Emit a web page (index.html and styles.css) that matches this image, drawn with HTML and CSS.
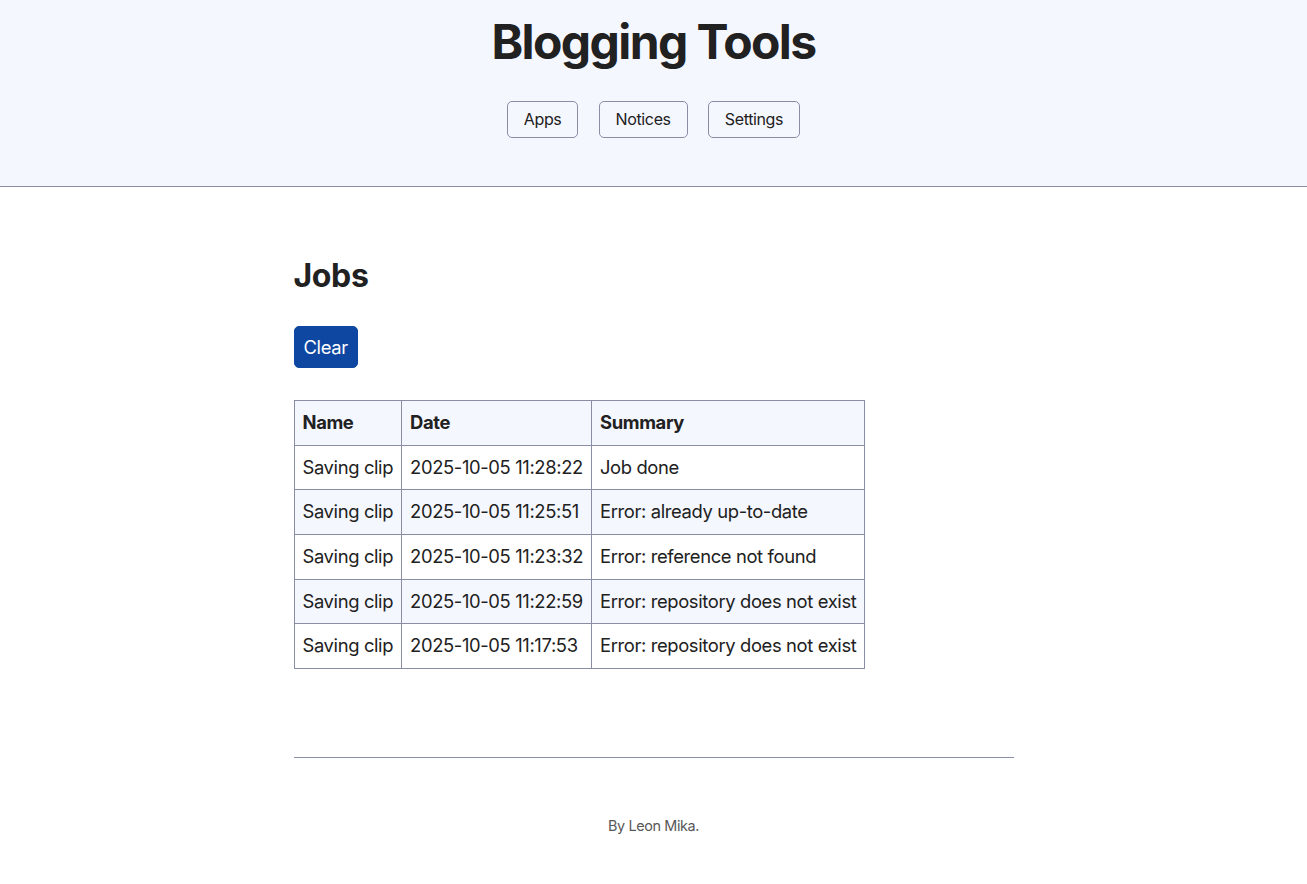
FILE: index.html
```html
<!DOCTYPE html>
<html lang="en">
<head>
<meta charset="utf-8">
<title>Blogging Tools</title>
<link rel="stylesheet" href="styles.css">
</head>
<body>
<header class="site-header">
  <h1 class="site-title">Blogging Tools</h1>
  <nav class="site-nav">
    <a href="#">Apps</a>
    <a href="#">Notices</a>
    <a href="#">Settings</a>
  </nav>
</header>
<main class="content">
  <h2 class="page-title">Jobs</h2>
  <form class="actions">
    <button type="button" class="btn">Clear</button>
  </form>
  <table class="jobs">
    <thead>
      <tr><th>Name</th><th>Date</th><th>Summary</th></tr>
    </thead>
    <tbody>
      <tr><td>Saving clip</td><td>2025-10-05 11:28:22</td><td>Job done</td></tr>
      <tr><td>Saving clip</td><td>2025-10-05 11:25:51</td><td>Error: already up-to-date</td></tr>
      <tr><td>Saving clip</td><td>2025-10-05 11:23:32</td><td>Error: reference not found</td></tr>
      <tr><td>Saving clip</td><td>2025-10-05 11:22:59</td><td>Error: repository does not exist</td></tr>
      <tr><td>Saving clip</td><td>2025-10-05 11:17:53</td><td>Error: repository does not exist</td></tr>
    </tbody>
  </table>
</main>
<footer class="site-footer">
  <p>By Leon Mika.</p>
</footer>
</body>
</html>
```

FILE: styles.css
```css
* { box-sizing: border-box; }

html { font-size: 16px; }

body {
  margin: 0;
  font-family: Inter, "Noto Sans", sans-serif;
  font-size: 18.4px;
  line-height: 1.5;
  letter-spacing: -0.02em;
  color: #212121;
  background: #fff;
  display: grid;
  grid-template-columns: 1fr min(720px, 90%) 1fr;
}

body > * { grid-column: 2; }

.site-header {
  grid-column: 1 / -1;
  background: #f5f7ff;
  border-bottom: 1px solid #898ea4;
  text-align: center;
  padding: 0 8px 32px;
}

.site-title {
  font-size: 48px;
  line-height: 1.1;
  font-weight: 700;
  margin: 16px auto;
  letter-spacing: -1.6px;
}

.site-nav {
  font-size: 16px;
  line-height: 2;
  padding-top: 16px;
}

.site-nav a {
  display: inline-block;
  border: 1px solid #898ea4;
  border-radius: 5px;
  color: #212121;
  text-decoration: none;
  margin: 0 8px 16px;
  padding: 1.6px 16px;
}

.content {
  padding-top: 24px;
}

.page-title {
  font-size: 32px;
  line-height: 1.1;
  font-weight: 700;
  margin: 47px 0 33px;
}

.actions { margin: 0; }

.btn {
  font-family: inherit;
  font-size: 18.4px;
  letter-spacing: inherit;
  line-height: 24px;
  background: #0d47a1;
  color: #fff;
  border: 1px solid #0d47a1;
  border-radius: 5px;
  padding: 8px 9px;
  margin: 0 0 8px;
  cursor: pointer;
}

.jobs {
  border-collapse: collapse;
  margin: 24px 0;
}

.jobs th,
.jobs td {
  border: 1px solid #898ea4;
  text-align: left;
  padding: 8px;
  vertical-align: top;
}

.jobs th {
  background: #f5f7ff;
  font-weight: 700;
}

.jobs tbody tr:nth-child(even) {
  background: #f5f7ff;
}

.site-footer {
  margin-top: 64px;
  border-top: 1px solid #898ea4;
  padding: 32px 16px 24px;
  text-align: center;
  color: #585858;
  font-size: 14.4px;
}

.site-footer p {
  margin: 25px 0;
}
```
